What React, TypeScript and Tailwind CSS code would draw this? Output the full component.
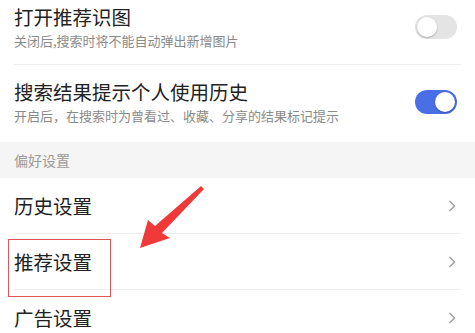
const font = { fontFamily: '"Noto Sans CJK SC", "Noto Sans", sans-serif' };

function Toggle({ on }: { on: boolean }) {
  return (
    <div
      className={`relative h-[24px] w-[42px] shrink-0 rounded-full ${on ? "bg-[#4a6ee6]" : "bg-[#e4e4e4]"}`}
    >
      <div
        className={`absolute top-[2px] h-[20px] w-[20px] rounded-full bg-white shadow-[0_1px_2px_rgba(0,0,0,0.25)] ${on ? "right-[2px]" : "left-[2px]"}`}
      />
    </div>
  );
}

function Chevron() {
  return (
    <svg width="8" height="12" viewBox="0 0 8 12" className="shrink-0">
      <polyline points="1.5,1 6.5,6 1.5,11" fill="none" stroke="#a0a0a0" strokeWidth="1.5" />
    </svg>
  );
}

const switches = [
  { title: "打开推荐识图", desc: "关闭后,搜索时将不能自动弹出新增图片", on: false },
  { title: "搜索结果提示个人使用历史", desc: "开启后，在搜索时为曾看过、收藏、分享的结果标记提示", on: true },
];

const links = ["历史设置", "推荐设置", "广告设置"];

export default function App() {
  return (
    <div className="relative h-[333px] w-[475px] overflow-hidden bg-white" style={font}>
      {/* switch rows */}
      <div className="mx-[14px] flex h-[65px] items-start justify-between border-b border-[#eeeeee] pr-[4px]">
        <div className="flex flex-col gap-[3px] pt-[5px]">
          <span className="text-[19.5px] leading-[24px] text-[#222222]">{switches[0].title}</span>
          <span className="text-[13px] leading-[18px] text-[#8a8a8a]">{switches[0].desc}</span>
        </div>
        <div className="mt-[15px]">
          <Toggle on={switches[0].on} />
        </div>
      </div>
      <div className="mx-[14px] flex h-[77px] items-start justify-between pr-[4px]">
        <div className="flex flex-col gap-[3px] pt-[15px]">
          <span className="text-[19.5px] leading-[24px] text-[#222222]">{switches[1].title}</span>
          <span className="text-[13px] leading-[18px] text-[#8a8a8a]">{switches[1].desc}</span>
        </div>
        <div className="mt-[25px]">
          <Toggle on={switches[1].on} />
        </div>
      </div>

      {/* section header */}
      <div className="flex h-[36px] items-center bg-[#f5f5f5] px-[14px] text-[14px] text-[#9a9a9a]">
        偏好设置
      </div>

      {/* link rows */}
      {links.map((label, i) => (
        <div
          key={label}
          className={`mx-[14px] flex h-[56px] items-center justify-between pr-[5px] ${i < links.length - 1 ? "border-b border-[#eeeeee]" : ""}`}
        >
          <span className="text-[19.5px] leading-[24px] text-[#222222]">{label}</span>
          <Chevron />
        </div>
      ))}

      {/* annotation: red box */}
      <div className="pointer-events-none absolute left-[8px] top-[239px] h-[58px] w-[103px] border-[1.5px] border-[#e05555]" />

      {/* annotation: arrow */}
      <svg className="pointer-events-none absolute left-0 top-0" width="475" height="333">
        <polygon
          points="140,248 148,220 155,226 201,186 204,189 162,233 170,238"
          fill="#f03a3a"
        />
      </svg>
    </div>
  );
}
